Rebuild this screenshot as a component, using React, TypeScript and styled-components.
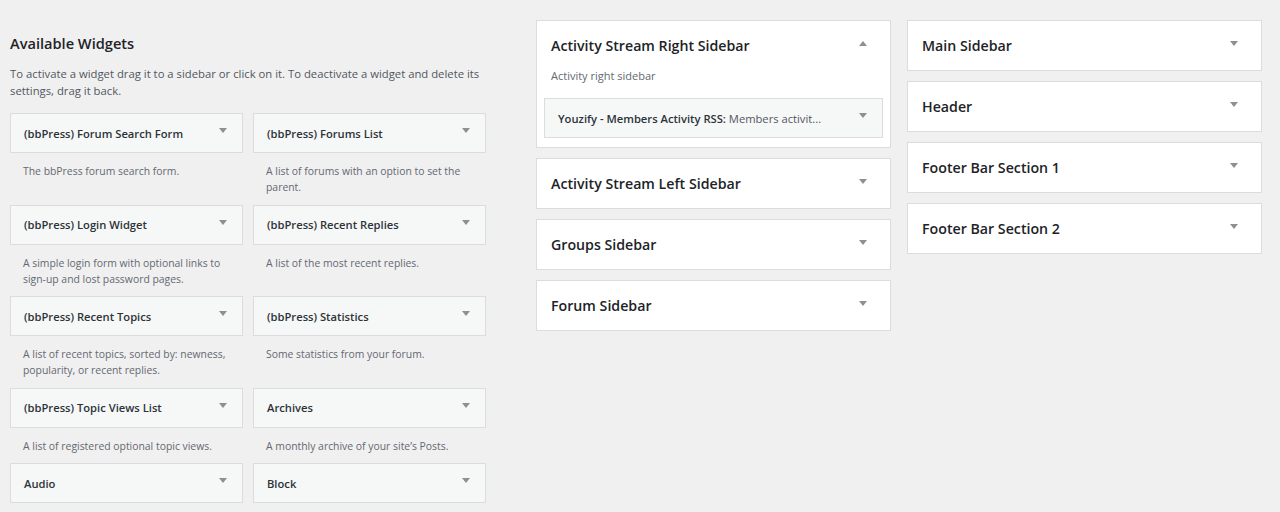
import React from "react";
import styled, { createGlobalStyle } from "styled-components";

const GlobalStyle = createGlobalStyle`
  html, body {
    margin: 0;
    padding: 0;
    background: #f0f0f1;
  }
  body {
    font-family: "Open Sans", "Noto Sans", "Liberation Sans", sans-serif;
    color: #1d2327;
  }
`;

const Page = styled.div`
  display: flex;
  align-items: flex-start;
  padding: 20px 0 0 10px;
  width: 1280px;
  height: 512px;
  box-sizing: border-box;
  overflow: hidden;
`;

const AvailableColumn = styled.div`
  width: 476px;
  margin-right: 50px;
`;

const Heading = styled.h2`
  font-size: 14.6px;
  font-weight: 600;
  margin: 13px 0 12px;
  line-height: 20px;
`;

const Intro = styled.p`
  font-size: 11.3px;
  line-height: 17px;
  color: #50575e;
  margin: 0 0 14px;
`;

const WidgetGrid = styled.div`
  display: grid;
  grid-template-columns: 233px 233px;
  column-gap: 10px;
`;

const WidgetCell = styled.div`
  padding-bottom: 9px;
`;

const WidgetBar = styled.div`
  display: flex;
  align-items: center;
  justify-content: space-between;
  height: 40px;
  box-sizing: border-box;
  background: #f6f7f7;
  border: 1px solid #dcdcde;
  padding: 0 15px 0 13px;
  font-size: 11.2px;
  font-weight: 600;
  color: #2c3338;
  white-space: nowrap;
  overflow: hidden;
`;

const Muted = styled.span`
  font-weight: 400;
  color: #50575e;
`;

const Description = styled.div`
  font-size: 10.4px;
  line-height: 16.3px;
  color: #646970;
  padding: 10px 13px 0 13px;
`;

const SidebarColumn = styled.div`
  width: 355px;
  display: flex;
  flex-direction: column;
  gap: 10px;
  margin-right: 16px;
`;

const SidebarBox = styled.div`
  background: #fff;
  border: 1px solid #dcdcde;
  box-sizing: border-box;
`;

const SidebarHead = styled.div`
  display: flex;
  align-items: center;
  justify-content: space-between;
  height: 49px;
  padding: 0 23px 0 14px;
  font-size: 14.2px;
  font-weight: 600;
  color: #1d2327;
`;

const SidebarNote = styled.div`
  font-size: 11px;
  line-height: 16px;
  color: #646970;
  padding: 0 14px;
  margin: -2px 0 14px;
`;

const SidebarBody = styled.div`
  padding: 0 7px 9px 7px;
`;

const Arrow = styled.svg<{ $up?: boolean }>`
  width: 8px;
  height: 5px;
  flex: none;
  margin-top: -5px;
  transform: ${(p) => (p.$up ? "rotate(180deg)" : "none")};
`;

const Caret = ({ up }: { up?: boolean }) => (
  <Arrow $up={up} viewBox="0 0 8 5">
    <path d="M0 0 H8 L4 5 Z" fill="#8c8f94" />
  </Arrow>
);

const widgets: { title: string; desc?: string }[] = [
  { title: "(bbPress) Forum Search Form", desc: "The bbPress forum search form." },
  { title: "(bbPress) Forums List", desc: "A list of forums with an option to set the parent." },
  { title: "(bbPress) Login Widget", desc: "A simple login form with optional links to sign-up and lost password pages." },
  { title: "(bbPress) Recent Replies", desc: "A list of the most recent replies." },
  { title: "(bbPress) Recent Topics", desc: "A list of recent topics, sorted by: newness, popularity, or recent replies." },
  { title: "(bbPress) Statistics", desc: "Some statistics from your forum." },
  { title: "(bbPress) Topic Views List", desc: "A list of registered optional topic views." },
  { title: "Archives", desc: "A monthly archive of your site\u2019s Posts." },
  { title: "Audio" },
  { title: "Block" },
];

const middleSidebars = ["Activity Stream Left Sidebar", "Groups Sidebar", "Forum Sidebar"];
const rightSidebars = ["Main Sidebar", "Header", "Footer Bar Section 1", "Footer Bar Section 2"];

const App = () => {
  return (
    <>
      <GlobalStyle />
      <Page>
        <AvailableColumn>
          <Heading>Available Widgets</Heading>
          <Intro>
            To activate a widget drag it to a sidebar or click on it. To deactivate a widget and delete its
            settings, drag it back.
          </Intro>
          <WidgetGrid>
            {widgets.map((w) => (
              <WidgetCell key={w.title}>
                <WidgetBar>
                  {w.title}
                  <Caret />
                </WidgetBar>
                {w.desc && <Description>{w.desc}</Description>}
              </WidgetCell>
            ))}
          </WidgetGrid>
        </AvailableColumn>

        <SidebarColumn>
          <SidebarBox>
            <SidebarHead>
              Activity Stream Right Sidebar
              <Caret up />
            </SidebarHead>
            <SidebarNote>Activity right sidebar</SidebarNote>
            <SidebarBody>
              <WidgetBar>
                <span>
                  Youzify - Members Activity RSS: <Muted>Members activit...</Muted>
                </span>
                <Caret />
              </WidgetBar>
            </SidebarBody>
          </SidebarBox>
          {middleSidebars.map((s) => (
            <SidebarBox key={s}>
              <SidebarHead>
                {s}
                <Caret />
              </SidebarHead>
            </SidebarBox>
          ))}
        </SidebarColumn>

        <SidebarColumn>
          {rightSidebars.map((s) => (
            <SidebarBox key={s}>
              <SidebarHead>
                {s}
                <Caret />
              </SidebarHead>
            </SidebarBox>
          ))}
        </SidebarColumn>
      </Page>
    </>
  );
};

export default App;
